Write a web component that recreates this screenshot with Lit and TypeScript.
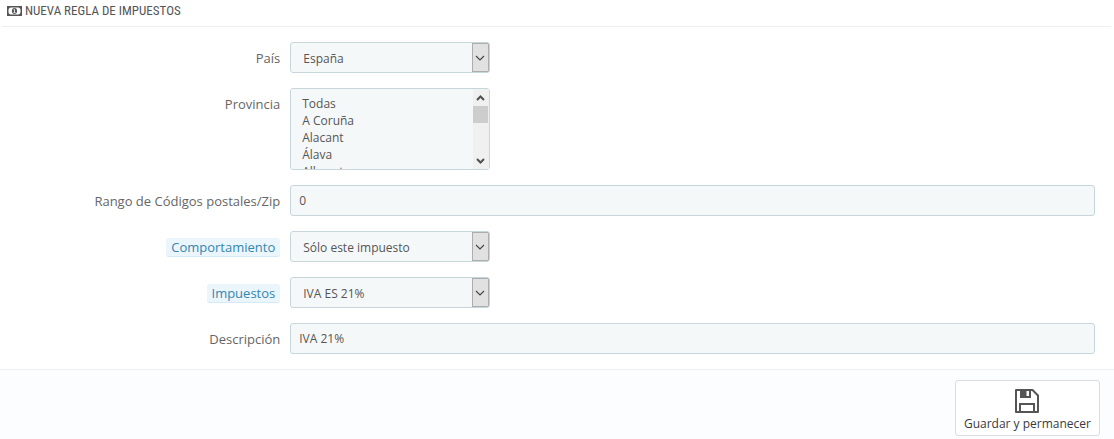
import { LitElement, html, css } from "lit";
import { customElement } from "lit/decorators.js";

const PROVINCES = [
  "Todas", "A Coruña", "Alacant", "Álava", "Albacete", "Almería", "Asturias", "Ávila", "Badajoz",
  "Balears", "Barcelona", "Bizkaia", "Burgos", "Cáceres", "Cádiz", "Cantabria", "Castelló", "Ceuta",
  "Ciudad Real", "Córdoba", "Cuenca", "Gipuzkoa", "Girona", "Granada", "Guadalajara", "Huelva",
  "Huesca", "Jaén", "La Rioja", "Las Palmas", "León", "Lleida", "Lugo", "Madrid", "Málaga",
];

@customElement("app-root")
export class AppRoot extends LitElement {
  static styles = css`
    :host {
      display: flex;
      flex-direction: column;
      min-height: 100vh;
      background: #fff;
      color: #555;
      font: 12px/17px "Open Sans", sans-serif;
    }
    * {
      box-sizing: border-box;
    }
    .heading {
      display: flex;
      align-items: center;
      gap: 3px;
      height: 27px;
      margin: 0 3px 15px 2px;
      padding: 0 5px 4px;
      border-bottom: 1px solid #eee;
      font: 400 13px/22px "Ubuntu Condensed", "Roboto Condensed", sans-serif;
      text-transform: uppercase;
    }
    .form {
      display: flex;
      flex-direction: column;
      gap: 15px;
      padding: 0 19px 15px 12px;
    }
    .row {
      display: grid;
      grid-template-columns: minmax(0, 1fr) minmax(0, 3fr);
      column-gap: 10px;
      align-items: start;
    }
    .label {
      justify-self: end;
      padding-top: 7px;
      color: #666;
      font-size: 13px;
      line-height: 19px;
      text-align: right;
    }
    .hint {
      display: inline-block;
      margin-left: 4px;
      padding: 0 5px;
      border-bottom: 1px solid #d5eaf5;
      border-radius: 3px;
      background: #ebf5fc;
      color: #3586ae;
      line-height: 18px;
    }
    .control {
      display: block;
      width: 100%;
      height: 31px;
      margin: 0;
      padding: 0 8px;
      border: 1px solid #c7d6db;
      border-radius: 3px;
      outline: 0;
      background-color: #f5f8f9;
      color: #555;
      font: inherit;
    }
    .select {
      appearance: none;
      width: 200px;
      padding: 2px 24px 0 12px;
      background-image: url("data:image/svg+xml,%3Csvg xmlns='http://www.w3.org/2000/svg' width='17' height='29'%3E%3Crect x='.5' y='.5' width='16' height='28' fill='%23e1e1e1' stroke='%23adadad'/%3E%3Cpath d='M4 13l4 4 4-4' fill='none' stroke='%23444' stroke-width='1.1'/%3E%3C/svg%3E");
      background-repeat: no-repeat;
      background-position: right top;
    }
    .listbox {
      position: relative;
      width: 200px;
    }
    .list {
      height: 82px;
      padding: 6px 16px 0 9px;
      overflow-y: scroll;
      scrollbar-width: none;
    }
    .list option {
      min-height: 17px;
      padding: 0 2px;
      line-height: 17px;
    }
    .scroll {
      position: absolute;
      top: 1px;
      right: 1px;
      bottom: 1px;
      display: flex;
      flex-direction: column;
      width: 16px;
      background: #f0f0f0;
      pointer-events: none;
    }
    .scroll svg {
      display: block;
      width: 16px;
      height: 17px;
    }
    .thumb {
      flex: 1;
    }
    .thumb::before {
      content: "";
      display: block;
      width: 15px;
      height: 17px;
      background: #cdcdcd;
    }
    .footer {
      flex: 1;
      display: flex;
      align-items: flex-start;
      justify-content: flex-end;
      padding: 10px 14px 3px;
      border-top: 1px solid #eee;
      background: #fcfdfe;
    }
    .save {
      display: flex;
      flex-direction: column;
      align-items: center;
      gap: 2px;
      height: 56px;
      margin: 0;
      padding: 8px 8px 0;
      border: 1px solid #ddd;
      border-radius: 3px;
      background: #fff;
      color: #363a41;
      font: inherit;
    }
  `;

  private select(id: string, value: string) {
    return html`<select class="control select" id=${id}><option selected>${value}</option></select>`;
  }

  render() {
    return html`
      <h3 class="heading">
        <svg width="15" height="10" viewBox="0 0 15 10" fill="none" aria-hidden="true">
          <path d="M.75 .75h13.5v8.5H.75z" stroke="#555" stroke-width="1.5" />
          <path d="M1 1h2.5L1 3.5zM14 1h-2.5L14 3.5zM1 9h2.5L1 6.5zM14 9h-2.5L14 6.5z" fill="#555" />
          <ellipse cx="7.5" cy="5" rx="2.6" ry="3" fill="#555" />
          <path d="M6.5 3.8l1-.5v3M6.4 6.6h2.2" stroke="#fff" stroke-width=".8" />
        </svg>
        Nueva regla de impuestos
      </h3>
      <div class="form">
        <div class="row">
          <label class="label" for="country">País</label>
          ${this.select("country", "España")}
        </div>
        <div class="row">
          <label class="label" for="state">Provincia</label>
          <div class="listbox">
            <select class="control list" id="state" multiple>
              ${PROVINCES.map((p) => html`<option>${p}</option>`)}
            </select>
            <div class="scroll" aria-hidden="true">
              <svg viewBox="0 0 16 17"><path d="M4 11l3.5-3.5L11 11" fill="none" stroke="#505050" stroke-width="2" /></svg>
              <div class="thumb"></div>
              <svg viewBox="0 0 16 17"><path d="M4 7l3.5 3.5L11 7" fill="none" stroke="#505050" stroke-width="2" /></svg>
            </div>
          </div>
        </div>
        <div class="row">
          <label class="label" for="zip">Rango de Códigos postales/Zip</label>
          <input class="control" id="zip" type="text" value="0" />
        </div>
        <div class="row">
          <label class="label" for="behavior"><span class="hint">Comportamiento</span></label>
          ${this.select("behavior", "Sólo este impuesto")}
        </div>
        <div class="row">
          <label class="label" for="tax"><span class="hint">Impuestos</span></label>
          ${this.select("tax", "IVA ES 21%")}
        </div>
        <div class="row">
          <label class="label" for="description">Descripción</label>
          <input class="control" id="description" type="text" value="IVA 21%" />
        </div>
      </div>
      <div class="footer">
        <button class="save" type="button">
          <svg width="24" height="24" viewBox="0 0 24 24" fill="none" aria-hidden="true">
            <path d="M1 1h16.5L23 6.5V23H1z" stroke="#555" stroke-width="2" stroke-linejoin="round" />
            <path d="M5 1h11v8H5z" fill="#555" />
            <path d="M11.5 2h2.5v5h-2.5z" fill="#fff" />
            <path d="M5 23v-8h14v8" stroke="#555" stroke-width="2" />
          </svg>
          Guardar y permanecer
        </button>
      </div>
    `;
  }
}
